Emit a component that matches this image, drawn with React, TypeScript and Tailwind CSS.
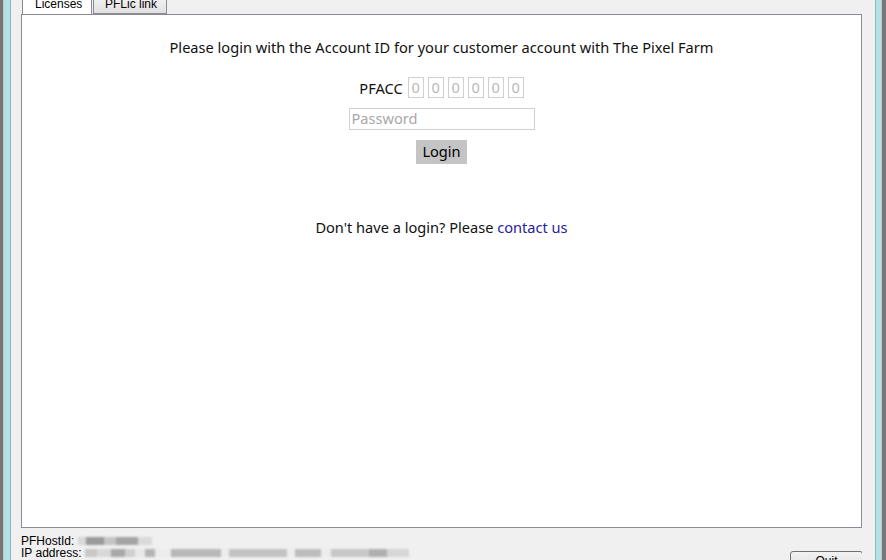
import React from "react";

const ui = { fontFamily: '"Liberation Sans", Arial, sans-serif' };
const body = { fontFamily: '"Noto Sans", "DejaVu Sans", sans-serif' };

function Blur({ widths }: { widths: { w: number; c: string }[] }) {
  return (
    <div className="flex h-[10px] items-center blur-[1px]">
      {widths.map((b, i) => (
        <div key={i} className="h-[8px]" style={{ width: b.w, background: b.c }} />
      ))}
    </div>
  );
}

export default function App() {
  const digits = [0, 1, 2, 3, 4, 5];

  return (
    <div className="w-[886px] h-[560px] flex overflow-hidden bg-[#f0f0f0]" style={ui}>
      {/* left window frame */}
      <div className="w-[3px] bg-[#767676]" />
      <div className="w-[1px] bg-[#c4c4c4]" />
      <div className="w-[6px] bg-[#b3e2e6]" />
      <div className="w-[1px] bg-[#8fb8bc]" />

      <div className="flex-1 flex flex-col pl-[10px] pr-[13px]">
        {/* tabs */}
        <div className="h-[14px] flex items-end text-[12px] text-black overflow-hidden">
          <div className="ml-[1px] w-[70px] h-[18px] bg-white border-x border-[#898c95] flex items-start pl-[12px] -mb-[1px] relative z-10">
            <span className="leading-[12px] mt-[1px]">Licenses</span>
          </div>
          <div className="ml-[1px] w-[74px] h-[18px] bg-gradient-to-b from-[#f4f4f4] to-[#e0e0e0] border border-[#898c95] flex items-start pl-[11px]">
            <span className="leading-[12px] mt-[1px]">PFLic link</span>
          </div>
        </div>

        {/* panel */}
        <div className="h-[514px] bg-white border border-[#898c95] flex flex-col items-center text-[14.6px] text-[#111]" style={body}>
          <p className="mt-[22px] leading-[20px]">
            Please login with the Account ID for your customer account with The Pixel Farm
          </p>

          <div className="mt-[20px] flex items-center gap-[4px]">
            <span className="mr-[1px] leading-[20px]">PFACC</span>
            {digits.map((d) => (
              <div
                key={d}
                className="w-[16px] h-[21px] border border-[#d0d0d0] flex items-center justify-center text-[#b8b8b8] leading-none"
              >
                0
              </div>
            ))}
          </div>

          <div className="mt-[10px] w-[186px] h-[22px] border border-[#d0d0d0] flex items-center px-[2px] text-[#a8a8a8]">
            Password
          </div>

          <div className="mt-[10px] w-[51px] h-[24px] bg-[#c4c4c4] flex items-center justify-center text-black">
            Login
          </div>

          <p className="mt-[53px] leading-[20px]">
            Don't have a login? Please <span className="text-[#27219c]">contact us</span>
          </p>
        </div>

        {/* footer */}
        <div className="flex-1 flex justify-between overflow-hidden">
          <div className="pt-[7px] text-[12px] leading-[12px] text-black">
            <div className="flex items-center gap-[4px] h-[12px]">
              <span>PFHostId:</span>
              <Blur
                widths={[
                  { w: 8, c: "#d8d8d8" },
                  { w: 18, c: "#9a9a9a" },
                  { w: 12, c: "#c4c4c4" },
                  { w: 22, c: "#a4a4a4" },
                  { w: 14, c: "#dadada" },
                ]}
              />
            </div>
            <div className="flex items-center gap-[4px] h-[12px]">
              <span>IP address:</span>
              <Blur
                widths={[
                  { w: 12, c: "#c8c8c8" },
                  { w: 14, c: "#d8d8d8" },
                  { w: 14, c: "#a8a8a8" },
                  { w: 10, c: "#cfcfcf" },
                  { w: 10, c: "#e8e8e8" },
                  { w: 10, c: "#b4b4b4" },
                  { w: 16, c: "#ececec" },
                  { w: 50, c: "#b8b8b8" },
                  { w: 8, c: "#ededed" },
                  { w: 58, c: "#c2c2c2" },
                  { w: 8, c: "#ededed" },
                  { w: 26, c: "#bdbdbd" },
                  { w: 10, c: "#ececec" },
                  { w: 38, c: "#c8c8c8" },
                  { w: 18, c: "#b0b0b0" },
                  { w: 22, c: "#d6d6d6" },
                ]}
              />
            </div>
          </div>
          <div className="mt-[23px] mr-[-1px] w-[73px] h-[23px] rounded-[3px] border border-[#707070] bg-gradient-to-b from-[#f2f2f2] to-[#dcdcdc] flex justify-center pt-[3px] text-[12px] leading-[12px]">
            Quit
          </div>
        </div>
      </div>

      {/* right window frame */}
      <div className="w-[1px] bg-[#8fb8bc]" />
      <div className="w-[5px] bg-[#b3e2e6]" />
      <div className="w-[1px] bg-[#c4c4c4]" />
      <div className="w-[4px] bg-[#767676]" />
    </div>
  );
}
